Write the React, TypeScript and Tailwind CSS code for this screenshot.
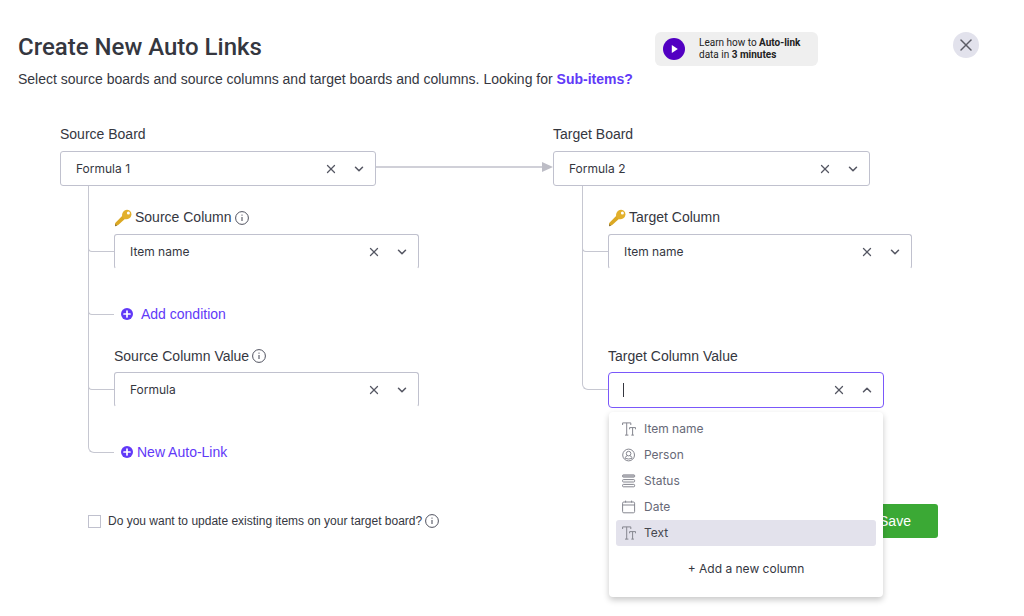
import { useState } from "react";
import { ChevronDown, ChevronUp, X } from "lucide-react";

function InfoIcon() {
  return (
    <svg viewBox="0 0 14 14" className="size-3.5 shrink-0 text-[#50525f]" fill="none" stroke="currentColor" aria-label="More info">
      <circle cx="7" cy="7" r="6.4" strokeWidth="1" />
      <path d="M7 6v4" strokeWidth="1.1" />
      <circle cx="7" cy="4.1" r="0.7" fill="currentColor" stroke="none" />
    </svg>
  );
}

function PlusIcon() {
  return (
    <svg viewBox="0 0 12 12" className="size-3 shrink-0">
      <circle cx="6" cy="6" r="6" fill="#6139f8" />
      <path d="M6 3v6M3 6h6" stroke="#fff" strokeWidth="1.7" strokeLinecap="round" />
    </svg>
  );
}

function KeyIcon() {
  return (
    <svg viewBox="0 0 18 18" className="size-[18px] shrink-0">
      <path d="M8.6 6.6 11.4 9.4 4.2 16 1 17.2 1 14.2z" fill="#dba823" />
      <path d="M1 15.2 3.4 16.4 1 17.3z" fill="#8a7442" />
      <path d="M10.2 1.7 Q12.6 .2 15.2 1.2 Q17.6 2.6 17.5 5.4 Q17.2 8 15.4 9.3 Q13 10.9 10.3 9.9 L8.2 7.7 Q7.4 4 10.2 1.7z" fill="#e2b02c" />
      <circle cx="14.4" cy="3.9" r="1.5" fill="#fff" />
    </svg>
  );
}

function TextIcon() {
  return (
    <svg viewBox="0 0 14 14" className="h-3.5 w-3.5 shrink-0" fill="none" stroke="currentColor" strokeWidth="1">
      <path d="M.6 3V.9h8.2V3M4.7.9v12.2M3 13.1h3.4" />
      <path d="M7.6 7.3V5.6h6V7.3M10.6 5.6v7.5M9.3 13.1h2.6" />
    </svg>
  );
}

function PersonIcon() {
  return (
    <svg viewBox="0 0 14 14" className="h-3.5 w-3.5 shrink-0" fill="none" stroke="currentColor" strokeWidth="1">
      <circle cx="6.6" cy="7" r="5.9" />
      <circle cx="6.6" cy="5.6" r="2.3" />
      <path d="M3.3 10.4V9.6q.3-1.5 2-1.8M9.9 10.4V9.6q-.3-1.5-2-1.8M3.3 10.4q3.3 1.2 6.6 0" />
    </svg>
  );
}

function StatusIcon() {
  return (
    <svg viewBox="0 0 14 14" className="h-3.5 w-3.5 shrink-0" fill="none" stroke="currentColor" strokeWidth="1">
      <rect x=".6" y=".9" width="12" height="2.2" rx=".6" fill="currentColor" fillOpacity=".5" />
      <rect x=".6" y="5.6" width="12" height="2.4" rx=".8" />
      <rect x=".6" y="10.4" width="12" height="2.4" rx=".8" />
    </svg>
  );
}

function DateIcon() {
  return (
    <svg viewBox="0 0 14 14" className="h-3.5 w-3.5 shrink-0" fill="none" stroke="currentColor" strokeWidth="1">
      <rect x=".6" y="2" width="12" height="10.8" rx="1.2" />
      <path d="M.6 5h12M3.6.6v2M9.6.6v2" />
    </svg>
  );
}

const options = [
  { label: "Item name", Icon: TextIcon },
  { label: "Person", Icon: PersonIcon },
  { label: "Status", Icon: StatusIcon },
  { label: "Date", Icon: DateIcon },
  { label: "Text", Icon: TextIcon },
];

function Picker({ id, value, open = false }: { id: string; value: string; open?: boolean }) {
  return (
    <div
      className={`flex h-[35px] items-center rounded-[3px] border border-[#c0c1ce] bg-white pl-[15px] pr-[9px] font-['Inter',sans-serif] text-xs text-[#35373f] ${
        open ? "border-b-transparent" : ""
      }`}
    >
      <select id={id} className="min-w-0 flex-1 appearance-none bg-transparent outline-none">
        <option>{value}</option>
      </select>
      <button aria-label="Clear" className="mr-3.5 text-[#555763]">
        <X className="size-3.5" strokeWidth={2.2} />
      </button>
      <ChevronDown className="size-3.5 text-[#555763]" strokeWidth={2.6} />
    </div>
  );
}

// one row of the tree: elbow line on the left, content on the right
function Branch({ first = false, add = false, last = false, children }) {
  return (
    <div className="flex">
      <div className="flex w-[26px] shrink-0 flex-col">
        <div
          className={`border-b border-l border-[#c6c7d1] ${last ? "rounded-bl-md" : "rounded-bl"} ${
            first ? "h-[66px]" : add ? "h-[29px]" : "h-12"
          }`}
        />
        {!last && <div className="-mt-1 flex-1 border-l border-[#c6c7d1]" />}
      </div>
      <div className={`min-w-0 flex-1 ${first ? "h-[100px] pt-[19px]" : add ? "flex h-14 items-center" : "h-[82px] pt-0.5"}`}>
        {children}
      </div>
    </div>
  );
}

function SourceSide() {
  return (
    <section className="flex-1">
      <label htmlFor="source-board" className="mb-[5px] block leading-6">Source Board</label>
      <div className="flex">
        <div className="w-[316px]">
          <Picker id="source-board" value="Formula 1" />
        </div>
        <div className="flex h-8 flex-1 items-center">
          <div className="h-0.5 flex-1 bg-[#d0d0d8]" />
          <svg viewBox="0 0 11 10" className="h-2.5 w-[11px]">
            <path d="M0 0 11 5 0 10z" fill="#bdbdc6" />
          </svg>
        </div>
      </div>
      <div className="ml-7 w-[331px]">
        <Branch first>
          <label htmlFor="source-column" className="mb-1 flex items-center gap-[3px] leading-[25px]">
            <KeyIcon />
            Source Column
            <InfoIcon />
          </label>
          <Picker id="source-column" value="Item name" open />
        </Branch>
        <Branch add>
          <button className="flex items-center gap-2 pl-[7px] text-[#6139f8]">
            <PlusIcon />
            Add condition
          </button>
        </Branch>
        <Branch>
          <label htmlFor="source-value" className="mb-1 flex items-center gap-[3px] leading-6">
            Source Column Value
            <InfoIcon />
          </label>
          <Picker id="source-value" value="Formula" open />
        </Branch>
        <Branch add last>
          <button className="flex items-center gap-1 pl-[7px] text-[#6139f8]">
            <PlusIcon />
            New Auto-Link
          </button>
        </Branch>
      </div>
    </section>
  );
}

function TargetSide() {
  const [query, setQuery] = useState("");

  return (
    <section className="w-[359px]">
      <label htmlFor="target-board" className="mb-[5px] block leading-6">Target Board</label>
      <div className="w-[317px]">
        <Picker id="target-board" value="Formula 2" />
      </div>
      <div className="ml-[29px]">
        <Branch first>
          <label htmlFor="target-column" className="mb-1 flex items-center gap-[3px] leading-[25px]">
            <KeyIcon />
            Target Column
          </label>
          <Picker id="target-column" value="Item name" open />
        </Branch>
        <div className="h-14 border-l border-[#c6c7d1]" />
        <Branch last>
          <label htmlFor="target-value" className="mb-1 block leading-6">Target Column Value</label>
          <div className="relative w-[276px] font-['Inter',sans-serif] text-xs">
            <div className="flex h-9 items-center rounded border border-[#7a58fa] bg-white pl-3.5 pr-[9px]">
              <span className="h-3.5 w-px bg-[#35373f]" />
              <input
                id="target-value"
                value={query}
                onChange={(e) => setQuery(e.target.value)}
                className="min-w-0 flex-1 outline-none"
              />
              <button aria-label="Clear" className="mr-3.5 text-[#555763]">
                <X className="size-3.5" strokeWidth={2.2} />
              </button>
              <ChevronUp className="size-3.5 text-[#555763]" strokeWidth={2.6} />
            </div>

            {/* options menu */}
            <div className="absolute inset-x-px top-full z-10 mt-1 h-[185px] rounded bg-white px-[7px] pt-1 shadow-[0_3px_6px_rgba(0,0,0,0.22)]">
              <ul>
                {options.map(({ label, Icon }) => (
                  <li key={label}>
                    <button
                      className={`flex h-[26px] w-full items-center gap-2 rounded-[3px] px-1.5 text-left ${
                        label === "Text" ? "bg-[#e3e2ec] text-[#45474f]" : "text-[#676977]"
                      }`}
                    >
                      <span className="text-[#85868f]">
                        <Icon />
                      </span>
                      {label}
                    </button>
                  </li>
                ))}
              </ul>
              <button className="mt-2.5 h-[26px] w-full text-center">+ Add a new column</button>
            </div>
          </div>
        </Branch>
      </div>
    </section>
  );
}

export default function App() {
  return (
    <main className="min-h-screen bg-white pt-8 font-['Liberation_Sans',sans-serif] text-sm text-[#35373f]">
      <header className="pl-[18px] pr-[45px]">
        <div className="flex items-start">
          <h1 className="flex-1 font-['Roboto',sans-serif] text-2xl leading-[30px] font-medium">Create New Auto Links</h1>
          <button className="mr-[135px] flex h-[34px] w-[163px] items-center gap-3.5 rounded-md bg-[#efefef] pl-2 text-left font-['Roboto',sans-serif] text-[10px] leading-3 text-[#222]">
            <svg viewBox="0 0 22 22" className="size-[22px] shrink-0">
              <circle cx="11" cy="11" r="11" fill="#5200c2" />
              <path d="M8.8 7v8l6-4z" fill="#fff" />
            </svg>
            <span>
              Learn how to <b>Auto-link</b>
              <br />
              data in <b>3 minutes</b>
            </span>
          </button>
          <button aria-label="Close" className="flex size-[26px] items-center justify-center rounded-full bg-[#e2e2ec] text-[#5c5d66]">
            <X className="size-5" strokeWidth={1.8} />
          </button>
        </div>
        <p className="mt-[3px] leading-5">
          Select source boards and source columns and target boards and columns. Looking for{" "}
          <a href="#sub-items" className="font-bold text-[#6139f8]">Sub-items?</a>
        </p>
      </header>

      <div className="mt-[33px] flex pl-[60px] pr-28">
        <SourceSide />
        <TargetSide />
      </div>

      <footer className="mt-6 flex items-center justify-between pl-[88px] pr-[86px]">
        <label className="flex items-center gap-[7px] text-xs">
          <input type="checkbox" className="size-[13px] appearance-none border border-[#c0c1ce] bg-white" />
          <span className="flex items-center gap-[3px]">
            Do you want to update existing items on your target board?
            <InfoIcon />
          </span>
        </label>
        <button className="h-[34px] w-[86px] rounded-[3px] bg-[#3ba935] text-white">Save</button>
      </footer>
    </main>
  );
}
